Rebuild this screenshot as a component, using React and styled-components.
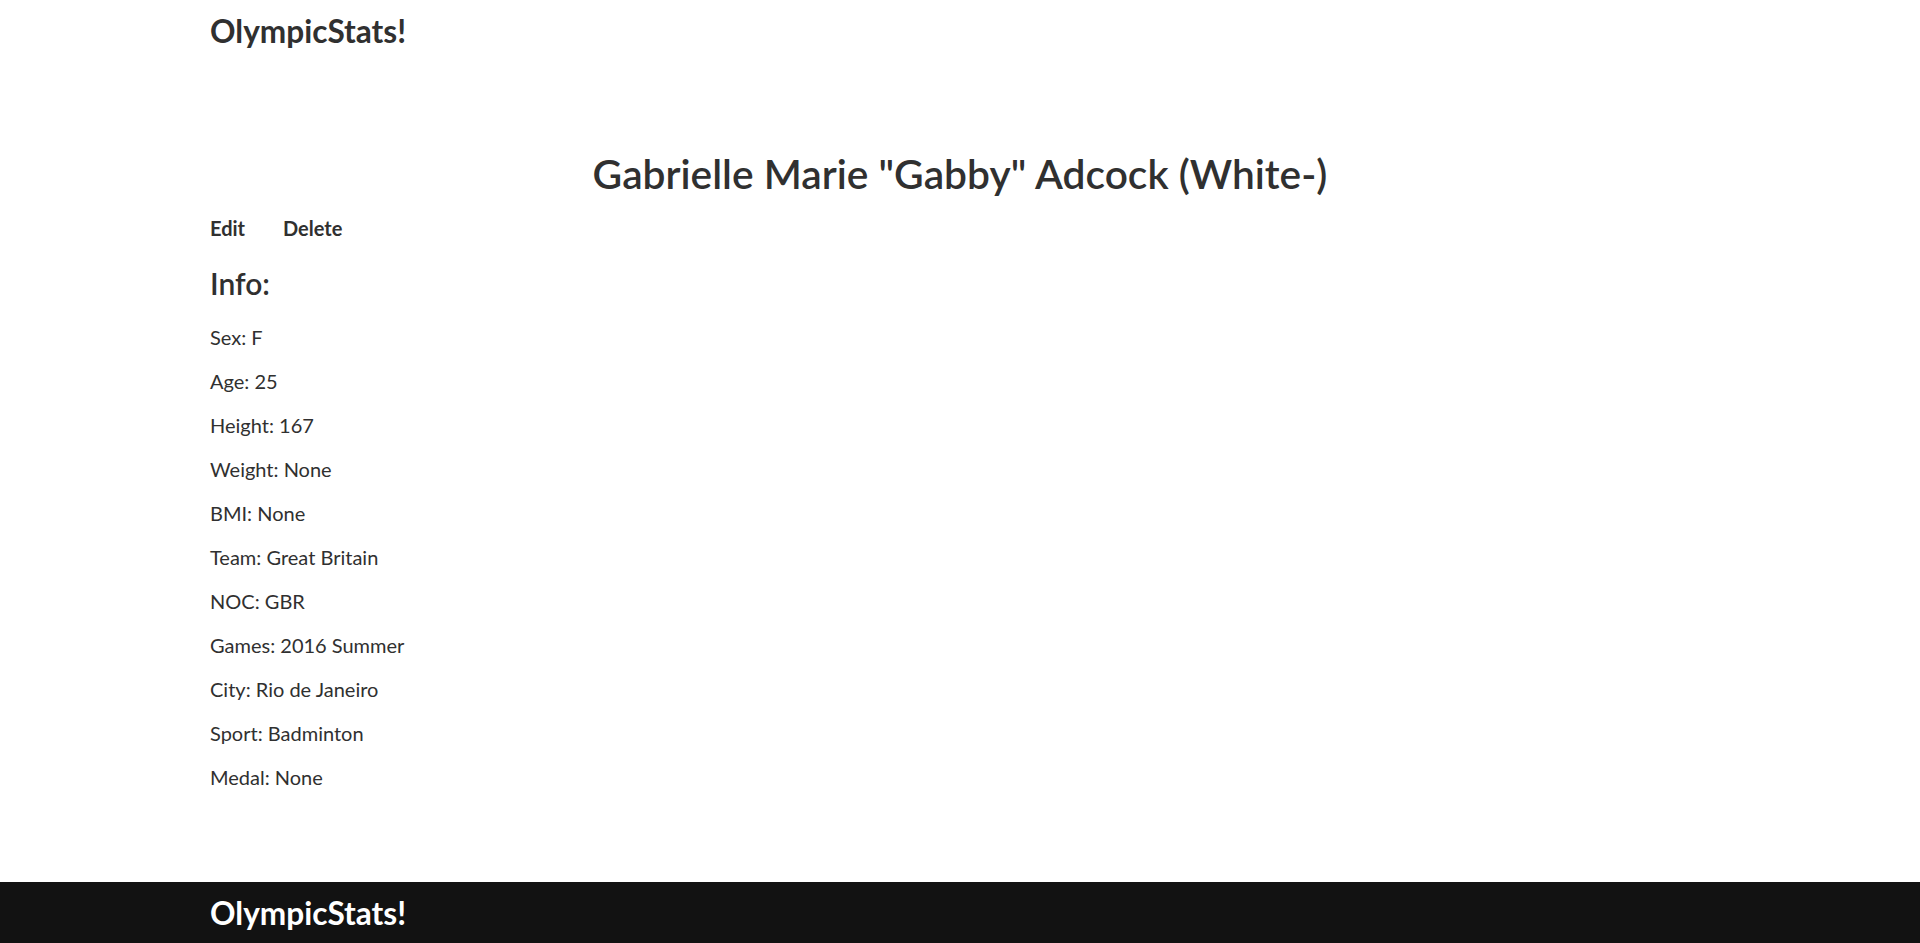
import styled, { createGlobalStyle } from 'styled-components';

const textColor = '#303030';

const EstilosGlobales = createGlobalStyle`
  * {
    box-sizing: border-box;
  }

  html, body {
    margin: 0;
    padding: 0;
    background: #ffffff;
    font-family: Lato, "Open Sans", sans-serif;
    color: ${textColor};
  }
`;

const atleta = {
  nombre: 'Gabrielle Marie "Gabby" Adcock (White-)',
  info: [
    ['Sex', 'F'],
    ['Age', '25'],
    ['Height', '167'],
    ['Weight', 'None'],
    ['BMI', 'None'],
    ['Team', 'Great Britain'],
    ['NOC', 'GBR'],
    ['Games', '2016 Summer'],
    ['City', 'Rio de Janeiro'],
    ['Sport', 'Badminton'],
    ['Medal', 'None'],
  ],
};

const App = () => {
  return (<>
    <EstilosGlobales/>
    <Header>
      <Contenedor>
        <Marca href='#'>OlympicStats!</Marca>
      </Contenedor>
    </Header>
    <Principal>
      <Contenedor>
        <Titulo>{atleta.nombre}</Titulo>
        <Acciones>
          <Accion href='#'>Edit</Accion>
          <Accion href='#'>Delete</Accion>
        </Acciones>
        <Subtitulo>Info:</Subtitulo>
        {atleta.info.map(([campo, valor]) => (
          <Dato key={campo}>{campo}: {valor}</Dato>
        ))}
      </Contenedor>
    </Principal>
    <Footer>
      <Contenedor>
        <Marca href='#' $claro>OlympicStats!</Marca>
      </Contenedor>
    </Footer>
  </>);
};

export default App;

const Contenedor = styled.div`
  margin: 0 auto;
  max-width: 1500px;
  width: 100%;
`;

const Header = styled.header`
  padding: 12px 0 0;
`;

const Marca = styled.a`
  color: ${({ $claro }) => $claro ? '#ffffff' : textColor};
  display: inline-block;
  font-size: 31.6px;
  font-weight: 700;
  line-height: 38px;
  text-decoration: none;
`;

const Principal = styled.main`
  padding: 100px 0 74px;
`;

const Titulo = styled.h1`
  font-size: 40.7px;
  font-weight: 600;
  line-height: 48px;
  margin: 0;
  text-align: center;
`;

const Acciones = styled.div`
  display: flex;
  gap: 38px;
  margin-top: 18px;
`;

const Accion = styled.a`
  color: ${textColor};
  font-size: 20px;
  font-weight: 700;
  line-height: 1.2;
  text-decoration: none;
`;

const Subtitulo = styled.h2`
  font-size: 30px;
  font-weight: 600;
  line-height: 1.2;
  margin: 25px 0 23px;
`;

const Dato = styled.p`
  font-size: 20px;
  line-height: 26px;
  margin: 0 0 18px;
`;

const Footer = styled.footer`
  background: #121212;
  padding: 12px 0 20px;
`;
